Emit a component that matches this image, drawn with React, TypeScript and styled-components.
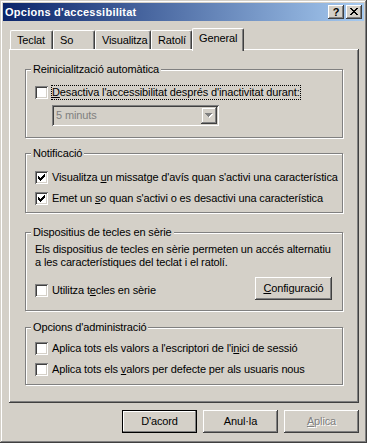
import React from "react";
import styled, { createGlobalStyle, css } from "styled-components";

const FACE = "#d4d0c8";
const SHADOW = "#808080";
const DARK = "#404040";

const Global = createGlobalStyle`
  html, body { margin: 0; padding: 0; background: ${FACE}; }
  body {
    font-family: "Liberation Sans", Arial, sans-serif;
    font-size: 11px;
    line-height: 13px;
    letter-spacing: -0.13px;
    color: #000;
  }
  * { box-sizing: border-box; }
`;

const raised = css`
  box-shadow: inset -1px -1px ${DARK}, inset 1px 1px #fff, inset -2px -2px ${SHADOW}, inset 2px 2px ${FACE};
`;

const sunken = css`
  box-shadow: inset 1px 1px ${SHADOW}, inset -1px -1px #fff, inset 2px 2px ${DARK}, inset -2px -2px ${FACE};
`;

const Window = styled.div`
  width: 367px;
  height: 443px;
  padding: 3px;
  background: ${FACE};
  box-shadow: inset -1px -1px ${DARK}, inset 1px 1px ${FACE}, inset -2px -2px ${SHADOW}, inset 2px 2px #fff;
  display: flex;
  flex-direction: column;
`;

const TitleBar = styled.div`
  flex: none;
  height: 18px;
  display: flex;
  align-items: center;
  padding: 0 2px 0 2px;
  background: linear-gradient(to right, #0a246a, #a6caf0);
`;

const Title = styled.span`
  flex: 1;
  color: #fff;
  font-weight: bold;
  letter-spacing: 0.25px;
  white-space: nowrap;
`;

const CaptionButton = styled.div<{ $gap?: number }>`
  flex: none;
  width: 16px;
  height: 14px;
  margin-left: ${(p) => p.$gap ?? 0}px;
  background: ${FACE};
  ${raised};
  display: flex;
  align-items: center;
  justify-content: center;
  font-weight: bold;
  font-size: 11px;
  line-height: 14px;
  color: #000;
  padding-bottom: 1px;
`;

const Content = styled.div`
  flex: 1;
  display: flex;
  flex-direction: column;
  padding: 7px 5px 0 6px;
`;

const TabRow = styled.div`
  flex: none;
  height: 21px;
  display: flex;
  align-items: flex-end;
  padding-left: 1px;
`;

const Tab = styled.div<{ $w: number; $active?: boolean }>`
  flex: none;
  width: ${(p) => p.$w}px;
  height: ${(p) => (p.$active ? 23 : 19)}px;
  margin-bottom: ${(p) => (p.$active ? -2 : 0)}px;
  position: relative;
  z-index: ${(p) => (p.$active ? 1 : 0)};
  background: ${FACE};
  border-top: 1px solid #fff;
  border-left: 1px solid #fff;
  border-right: 1px solid ${DARK};
  border-radius: 2px 2px 0 0;
  box-shadow: inset -1px 0 ${SHADOW};
  text-align: left;
  padding: 3px 0 0 ${(p) => (p.$active ? 6 : 6)}px;
  white-space: nowrap;
`;

const Panel = styled.div`
  flex: none;
  height: 354px;
  ${raised};
  display: flex;
  flex-direction: column;
  padding: 20px 16px 0 16px;
`;

const Group = styled.div<{ $h: number; $mt?: number; $pt: number }>`
  position: relative;
  flex: none;
  height: ${(p) => p.$h}px;
  margin-top: ${(p) => p.$mt ?? 0}px;
  padding: ${(p) => p.$pt}px 9px 0 9px;
  border: 1px solid ${SHADOW};
  box-shadow: inset 1px 1px #fff, 1px 1px #fff;
  display: flex;
  flex-direction: column;
  gap: 8px;
`;

const GroupCaption = styled.span`
  position: absolute;
  top: -7px;
  left: 5px;
  padding: 0 2px;
  background: ${FACE};
  white-space: nowrap;
`;

const Row = styled.div<{ $mt?: number }>`
  height: 13px;
  margin-top: ${(p) => p.$mt ?? 0}px;
  display: flex;
  align-items: center;
  gap: 3px;
`;

const Box = styled.span`
  flex: none;
  display: block;
  width: 13px;
  height: 13px;
  background: #fff;
  ${sunken};
  svg { display: block; }
`;

const Label = styled.span<{ $focus?: boolean }>`
  padding: 1px;
  white-space: nowrap;
  ${(p) =>
    p.$focus &&
    css`
      outline: 1px dotted #000;
      outline-offset: -1px;
    `}
`;

const Combo = styled.div`
  margin: -2px 0 0 17px;
  width: 167px;
  height: 21px;
  padding: 2px;
  background: ${FACE};
  ${sunken};
  display: flex;
  align-items: center;
`;

const ComboText = styled.span`
  flex: 1;
  color: ${SHADOW};
  padding-left: 2px;
`;

const DropButton = styled.span`
  flex: none;
  width: 16px;
  height: 17px;
  background: ${FACE};
  box-shadow: inset -1px -1px ${DARK}, inset 1px 1px ${FACE}, inset -2px -2px ${SHADOW}, inset 2px 2px #fff;
  display: flex;
  align-items: center;
  justify-content: center;
  svg { display: block; }
`;

const Para = styled.p`
  margin: 0;
  white-space: nowrap;
`;

const SplitRow = styled.div`
  display: flex;
  justify-content: space-between;
  align-items: flex-start;
  padding-right: 1px;
`;

const PushButton = styled.div<{ $w?: number; $default?: boolean; $disabled?: boolean }>`
  flex: none;
  width: ${(p) => p.$w ?? 75}px;
  height: 23px;
  background: ${FACE};
  display: flex;
  align-items: center;
  justify-content: center;
  white-space: nowrap;
  ${(p) =>
    p.$default
      ? css`
          border: 1px solid #000;
          box-shadow: inset -1px -1px ${SHADOW}, inset 1px 1px #fff;
        `
      : raised};
  ${(p) =>
    p.$disabled &&
    css`
      color: ${SHADOW};
      text-shadow: 1px 1px #fff;
    `}
`;

const ButtonRow = styled.div`
  display: flex;
  justify-content: flex-end;
  gap: 6px;
  margin-top: 7px;
`;

function pixels(map: string[]): string {
  let d = "";
  map.forEach((row, y) => {
    for (let x = 0; x < row.length; x++) {
      if (row[x] === "#") d += `M${x} ${y}h1v1h-1z`;
    }
  });
  return d;
}

const CLOSE = pixels([
  "##....##",
  ".##..##.",
  "..####..",
  "...##...",
  "..####..",
  ".##..##.",
  "##....##",
]);

const CHECK = pixels([
  "......#",
  ".....##",
  "#...###",
  "##.###.",
  "#####..",
  ".###...",
  "..#....",
]);

const ARROW = "M0 0h7v1h-1v1h-1v1h-1v1h-1v-1h-1v-1h-1v-1h-1z";

const CheckBox: React.FC<{ checked?: boolean }> = ({ checked }) => (
  <Box>
    {checked && (
      <svg width="13" height="13" viewBox="0 0 13 13" shapeRendering="crispEdges">
        <path d={CHECK} transform="translate(3 3)" fill="#000" />
      </svg>
    )}
  </Box>
);

const Option: React.FC<{ checked?: boolean; focus?: boolean; mt?: number; children: React.ReactNode }> = ({
  checked,
  focus,
  mt,
  children,
}) => (
  <Row $mt={mt}>
    <CheckBox checked={checked} />
    <Label $focus={focus}>{children}</Label>
  </Row>
);

export default function App() {
  return (
    <>
      <Global />
      <Window>
        <TitleBar>
          <Title>Opcions d'accessibilitat</Title>
          <CaptionButton>?</CaptionButton>
          <CaptionButton $gap={2}>
            <svg width="8" height="7" viewBox="0 0 8 7" shapeRendering="crispEdges">
              <path d={CLOSE} fill="#000" />
            </svg>
          </CaptionButton>
        </TitleBar>
        <Content>
          <TabRow>
            <Tab $w={43}>Teclat</Tab>
            <Tab $w={42}>So</Tab>
            <Tab $w={56}>Visualitza</Tab>
            <Tab $w={41}>Ratolí</Tab>
            <Tab $w={52} $active>
              General
            </Tab>
          </TabRow>
          <Panel>
            <Group $h={69} $pt={16}>
              <GroupCaption>Reinicialització automàtica</GroupCaption>
              <Option focus>
                <u>D</u>esactiva l'accessibilitat després d'inactivitat durant:
              </Option>
              <Combo>
                <ComboText>5 minuts</ComboText>
                <DropButton>
                  <svg width="8" height="5" viewBox="0 0 8 5" shapeRendering="crispEdges">
                    <path d={ARROW} transform="translate(1 1)" fill="#fff" />
                    <path d={ARROW} fill={SHADOW} />
                  </svg>
                </DropButton>
              </Combo>
            </Group>
            <Group $h={60} $mt={15} $pt={17}>
              <GroupCaption>Notificació</GroupCaption>
              <Option checked>
                Visualitza <u>u</u>n missatge d'avís quan s'activi una característica
              </Option>
              <Option checked>
                Emet un <u>s</u>o quan s'activi o es desactivi una característica
              </Option>
            </Group>
            <Group $h={79} $mt={19} $pt={10}>
              <GroupCaption>Dispositius de tecles en sèrie</GroupCaption>
              <Para>
                Els dispositius de tecles en sèrie permeten un accés alternatiu
                <br />a les característiques del teclat i el ratolí.
              </Para>
              <SplitRow>
                <Option mt={7}>
                  Utilitza t<u>e</u>cles en sèrie
                </Option>
                <PushButton $w={77}>
                  <u>C</u>onfiguració
                </PushButton>
              </SplitRow>
            </Group>
            <Group $h={58} $mt={16} $pt={14}>
              <GroupCaption>Opcions d'administració</GroupCaption>
              <Option>
                Aplica tots els valors a l'escriptori de l'i<u>n</u>ici de sessió
              </Option>
              <Option>
                Aplica tots els <u>v</u>alors per defecte per als usuaris nous
              </Option>
            </Group>
          </Panel>
          <ButtonRow>
            <PushButton $default>D'acord</PushButton>
            <PushButton>Anul·la</PushButton>
            <PushButton $disabled>
              <u>A</u>plica
            </PushButton>
          </ButtonRow>
        </Content>
      </Window>
    </>
  );
}
